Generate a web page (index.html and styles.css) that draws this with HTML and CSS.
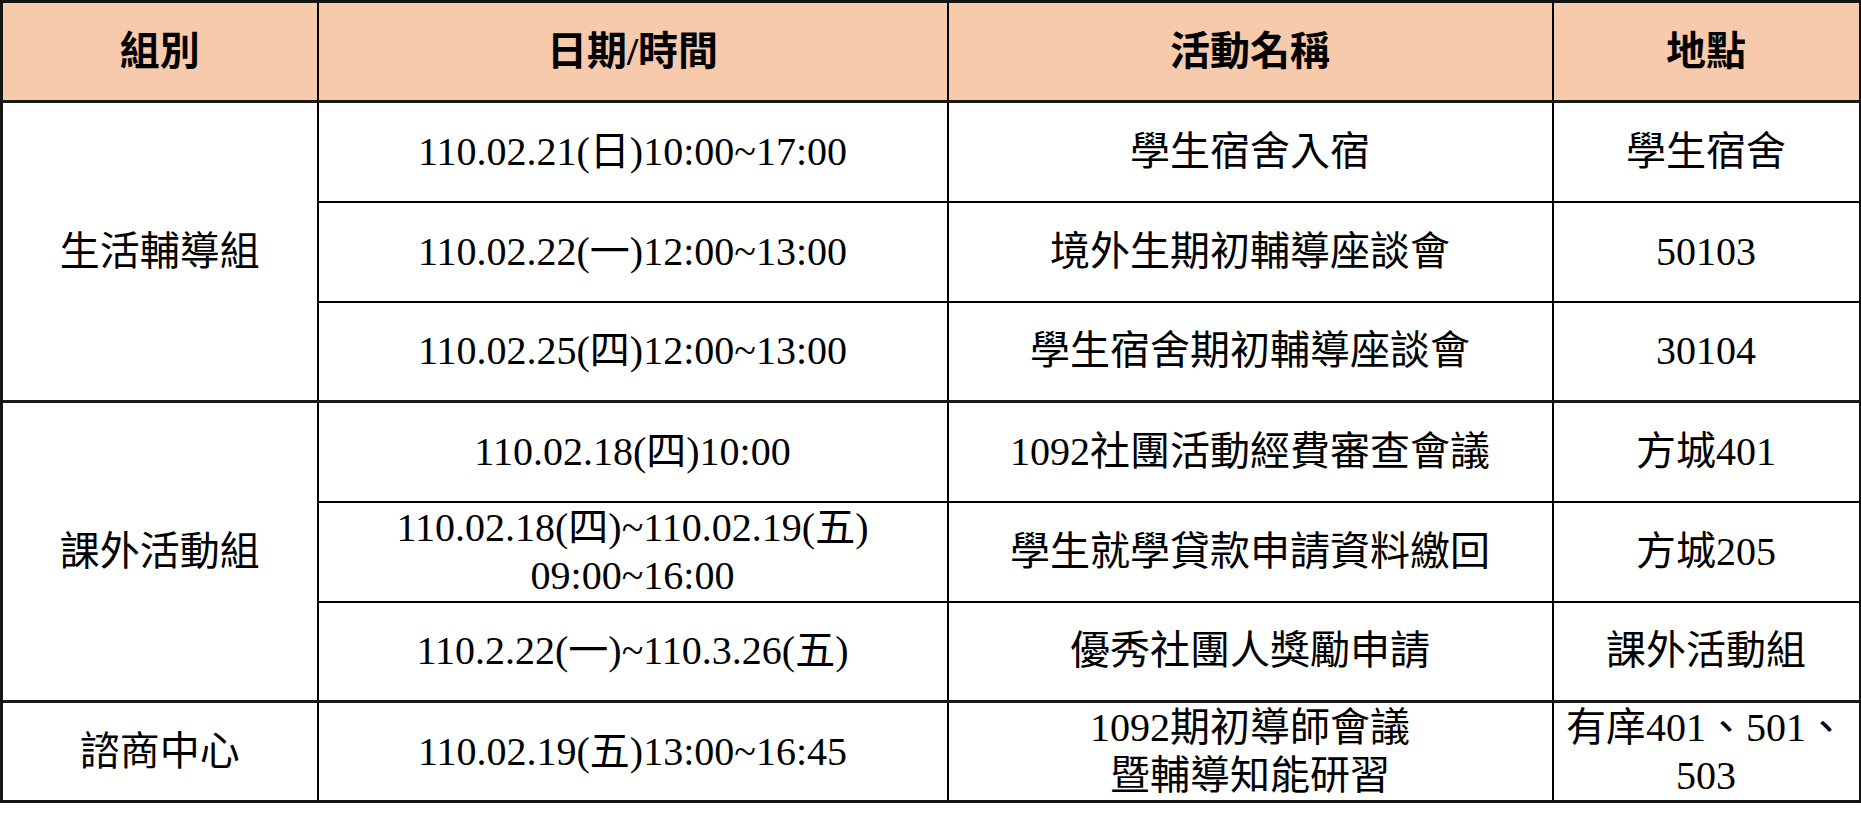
FILE: index.html
```html
<!DOCTYPE html>
<html lang="zh-Hant">
<head>
<meta charset="utf-8">
<title>活動時程表</title>
<link rel="stylesheet" href="styles.css">
</head>
<body>
<table class="schedule">
  <colgroup>
    <col class="c-group">
    <col class="c-date">
    <col class="c-name">
    <col class="c-place">
  </colgroup>
  <thead>
    <tr class="head-row">
      <th>組別</th>
      <th>日期/時間</th>
      <th>活動名稱</th>
      <th>地點</th>
    </tr>
  </thead>
  <tbody>
    <tr class="group-start">
      <td rowspan="3" class="group">生活輔導組</td>
      <td>110.02.21(日)10:00~17:00</td>
      <td>學生宿舍入宿</td>
      <td>學生宿舍</td>
    </tr>
    <tr>
      <td>110.02.22(一)12:00~13:00</td>
      <td>境外生期初輔導座談會</td>
      <td>50103</td>
    </tr>
    <tr>
      <td>110.02.25(四)12:00~13:00</td>
      <td>學生宿舍期初輔導座談會</td>
      <td>30104</td>
    </tr>
    <tr class="group-start">
      <td rowspan="3" class="group">課外活動組</td>
      <td>110.02.18(四)10:00</td>
      <td>1092社團活動經費審查會議</td>
      <td>方城401</td>
    </tr>
    <tr>
      <td>110.02.18(四)~110.02.19(五)<br>09:00~16:00</td>
      <td>學生就學貸款申請資料繳回</td>
      <td>方城205</td>
    </tr>
    <tr>
      <td>110.2.22(一)~110.3.26(五)</td>
      <td>優秀社團人獎勵申請</td>
      <td>課外活動組</td>
    </tr>
    <tr class="group-start">
      <td class="group">諮商中心</td>
      <td>110.02.19(五)13:00~16:45</td>
      <td>1092期初導師會議<br>暨輔導知能研習</td>
      <td class="tight">有庠401、501、<br>503</td>
    </tr>
  </tbody>
</table>
</body>
</html>
```

FILE: styles.css
```css
html, body {
  margin: 0;
  padding: 0;
  background: #ffffff;
}

.schedule {
  border-collapse: collapse;
  table-layout: fixed;
  width: 1859px;
  border: 3px solid #151515;
  font-family: "Liberation Serif", "Noto Sans CJK TC", serif;
  font-size: 40px;
  line-height: 1.2;
  color: #000;
}

.c-group { width: 316px; }
.c-date { width: 630px; }
.c-name { width: 605px; }
.c-place { width: 308px; }

.schedule th,
.schedule td {
  border: 2px solid #000;
  text-align: center;
  vertical-align: middle;
  padding: 0 6px;
  font-weight: normal;
}

.schedule tr {
  height: 100px;
}

.head-row th {
  background: #f7caac;
  font-weight: bold;
  border-bottom: 3px solid #1a1a1a;
  border-top: 3px solid #151515;
}

.schedule th:first-child,
.schedule td.group {
  border-left: 3px solid #151515;
}

.schedule th:last-child,
.schedule tr > td:last-child {
  border-right: 4px solid #111;
}

.group-start td {
  border-top: 3px solid #1a1a1a;
}

.schedule tbody tr:last-child td {
  border-bottom: 3px solid #151515;
}

.group {
  letter-spacing: 0;
}

.tight {
  padding: 0 4px;
}
```
